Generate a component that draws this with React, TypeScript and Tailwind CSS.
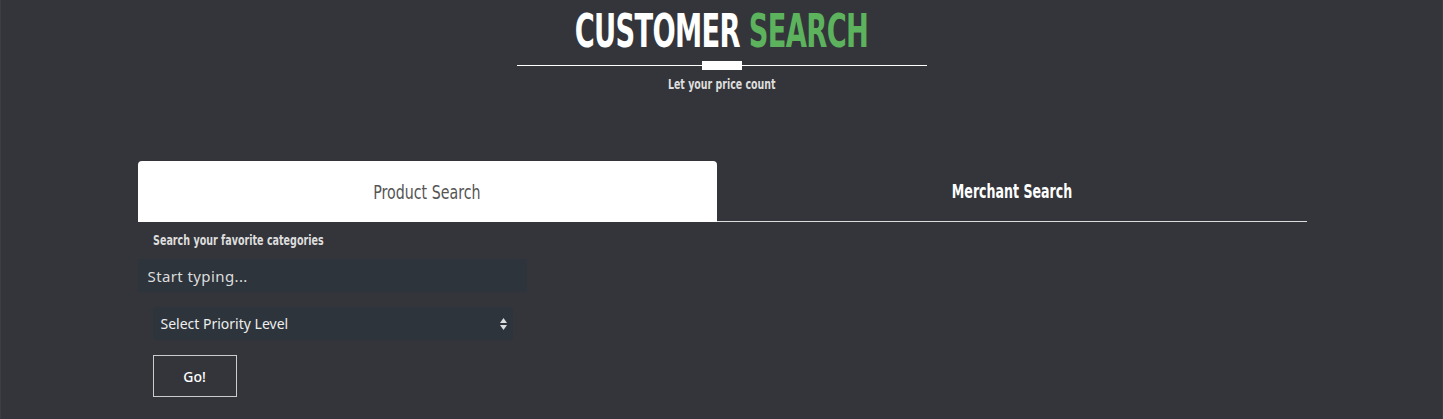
import { useState } from "react";

// condensed headline face, Oswald-like
const cond = { fontFamily: '"DejaVu Sans Condensed", "Liberation Sans Narrow", "Liberation Sans", sans-serif' };
const body = { fontFamily: '"Noto Sans", "Open Sans", sans-serif' };

export default function App() {
  const [tab, setTab] = useState("product");
  const [query, setQuery] = useState("");

  return (
    <div className="min-h-[419px] w-full bg-[#34353a] text-white border-x border-[#3d3e43]" style={body}>
      {/* HEADER */}
      <div className="flex flex-col items-center pt-[6px]">
        <h1
          className="text-[46px] leading-[50px] font-bold tracking-[-1px] scale-x-[0.66] origin-center"
          style={cond}
        >
          CUSTOMER <span className="text-[#5cb25d]">SEARCH</span>
        </h1>
        <div className="relative mt-[4px] flex h-[10px] w-[410px] items-center justify-center">
          <div className="h-px w-full bg-white" />
          <div className="absolute h-[9px] w-[40px] bg-white" />
        </div>
        <p className="mt-[4px] text-[14px] font-bold text-[#dddddd] scale-x-[0.75]" style={cond}>
          Let your price count
        </p>
      </div>

      {/* TABS */}
      <div className="mx-auto mt-[66px] w-[1170px] pl-[1px]">
        <div className="flex h-[61px]">
          <button
            onClick={() => setTab("product")}
            className={`w-[579px] rounded-t-[4px] text-[20px] ${
              tab === "product" ? "bg-white text-[#555555]" : "border-b border-[#dddddd] text-white font-bold"
            }`}
            style={cond}
          >
            <span className="inline-block scale-x-[0.79]">Product Search</span>
          </button>
          <button
            onClick={() => setTab("merchant")}
            className={`w-[590px] rounded-t-[4px] text-[20px] ${
              tab === "merchant" ? "bg-white text-[#555555]" : "border-b border-[#dddddd] text-white font-bold"
            }`}
            style={cond}
          >
            <span className="inline-block scale-x-[0.70]">Merchant Search</span>
          </button>
        </div>

        {/* FORM */}
        <div className="pt-[8px]">
          <p className="ml-[15px] text-[14px] font-bold text-[#dddddd]" style={cond}>
            <span className="inline-block origin-left scale-x-[0.76]">Search your favorite categories</span>
          </p>
          <input
            className="mt-[8px] block h-[33px] w-[389px] bg-[#2d343b] px-[10px] text-[15px] tracking-[0.4px] text-white outline-none placeholder:text-[#dddddd]"
            placeholder="Start typing..."
            value={query}
            onChange={(e) => setQuery(e.target.value)}
          />
          <div className="relative ml-[15px] mt-[15px] flex h-[33px] w-[360px] items-center rounded-[4px] bg-[#2d343b] pl-[8px] text-[14px] text-[#eeeeee]">
            Select Priority Level
            <svg className="absolute right-[6px] top-[11px]" width="7" height="12" viewBox="0 0 7 12">
              <path d="M3.5 0 L7 5 H0 Z" fill="#dddddd" />
              <path d="M3.5 12 L7 7 H0 Z" fill="#dddddd" />
            </svg>
          </div>
          <button className="ml-[15px] mt-[15px] h-[42px] w-[84px] border border-[#cccccc] text-[14px] font-medium text-white">
            Go!
          </button>
        </div>
      </div>
    </div>
  );
}
